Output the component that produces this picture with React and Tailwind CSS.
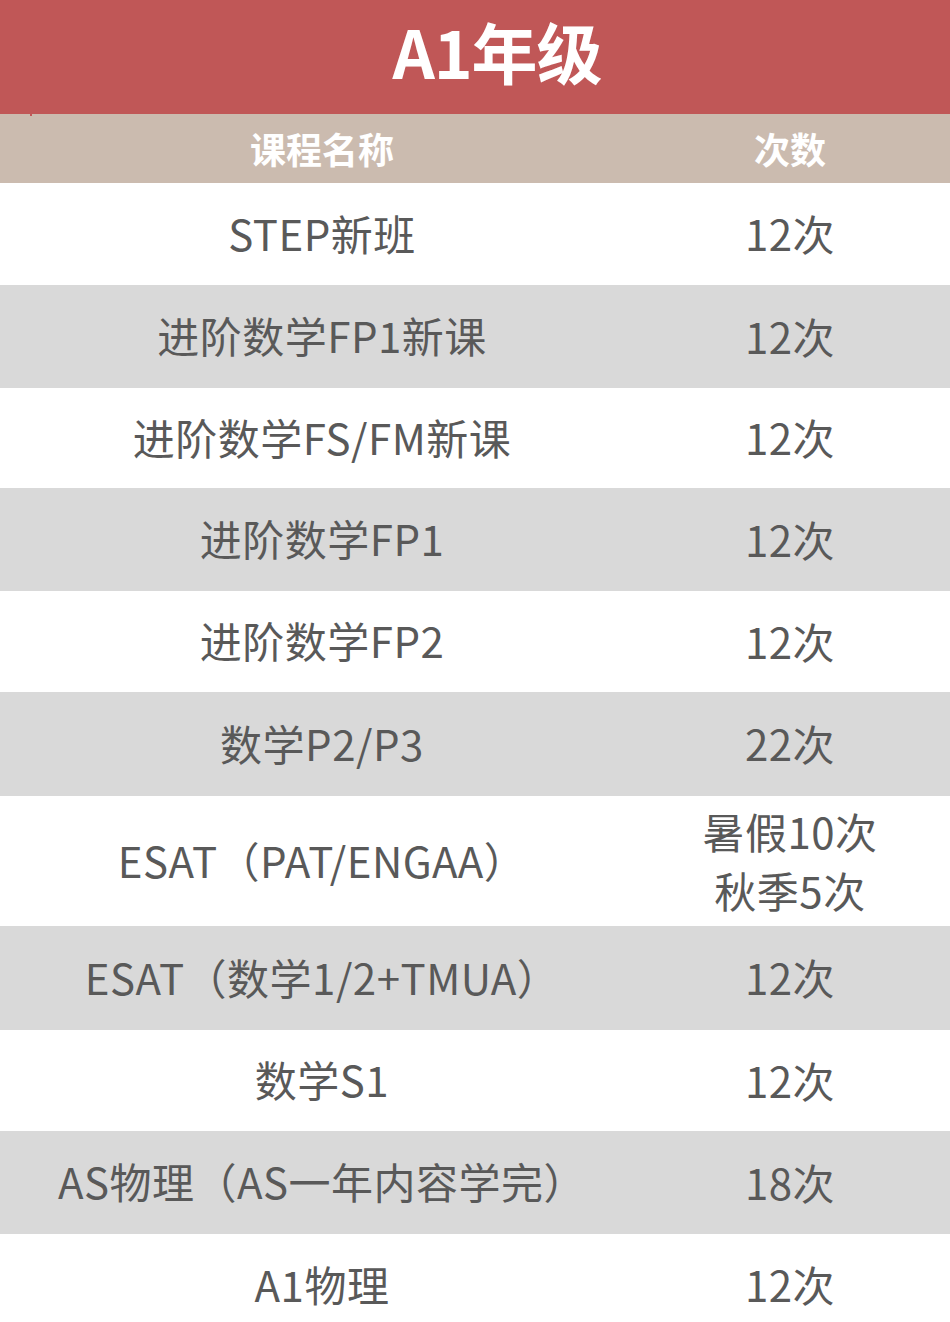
const rows = [
  { name: "STEP新班", count: ["12次"], h: "h-[102px]" },
  { name: "进阶数学FP1新课", count: ["12次"], h: "h-[103px]" },
  { name: "进阶数学FS/FM新课", count: ["12次"], h: "h-[100px]" },
  { name: "进阶数学FP1", count: ["12次"], h: "h-[103px]" },
  { name: "进阶数学FP2", count: ["12次"], h: "h-[101px]" },
  { name: "数学P2/P3", count: ["22次"], h: "h-[104px]" },
  { name: "ESAT（PAT/ENGAA）", count: ["暑假10次", "秋季5次"], h: "h-[130px]" },
  { name: "ESAT（数学1/2+TMUA）", count: ["12次"], h: "h-[104px]" },
  { name: "数学S1", count: ["12次"], h: "h-[101px]" },
  { name: "AS物理（AS一年内容学完）", count: ["18次"], h: "h-[103px]" },
  { name: "A1物理", count: ["12次"], h: "h-[102px]" },
];

export default function App() {
  return (
    <div className="w-[950px] h-[1322px] overflow-hidden bg-white font-['Noto_Sans_CJK_SC','Noto_Sans',sans-serif]">
      <div className="h-[114px] bg-[#c05757] flex items-center justify-center pl-[44px]">
        <h1 className="text-[66px] font-bold text-white tracking-[-1px] leading-none pb-[14px]">A1年级</h1>
      </div>
      <div className="relative h-[69px] bg-[#cbbbaf] grid grid-cols-[644px_1fr] items-center text-white font-bold text-[36px] leading-none">
        <span className="absolute left-[30px] top-0 w-[2px] h-[2px] bg-[#c05757]" />
        <div className="text-center pb-[2px]">课程名称</div>
        <div className="text-center pr-[14px] pb-[2px]">次数</div>
      </div>
      {rows.map((row, i) => (
        <div
          key={i}
          className={`${row.h} grid grid-cols-[644px_1fr] items-center text-[#595959] text-[42px] tracking-[0.5px] ${i % 2 === 1 ? "bg-[#d9d9d9]" : "bg-white"}`}
        >
          <div className="text-center leading-none whitespace-nowrap pb-[3px]">{row.name}</div>
          <div className="text-center pr-[14px] leading-[59px] pb-[3px]">
            {row.count.map((c, j) => (
              <div key={j}>{c}</div>
            ))}
          </div>
        </div>
      ))}
    </div>
  );
}
